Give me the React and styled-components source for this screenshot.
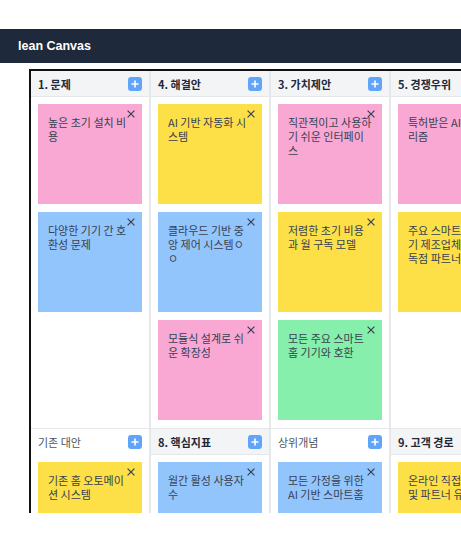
import React from "react";
import styled, { createGlobalStyle } from "styled-components";

const GlobalStyle = createGlobalStyle`
  html, body {
    margin: 0;
    padding: 0;
    background: #ffffff;
    overflow: hidden;
  }
  body {
    font-family: "Noto Sans CJK KR", "Noto Sans", sans-serif;
  }
`;

const cardColors = {
  pink: "#f9a8d4",
  yellow: "#fde047",
  blue: "#93c5fd",
  green: "#86efac",
};

// Styled components
const Page = styled.div`
  padding-top: 29px;
`;

const NavBar = styled.header`
  height: 34px;
  background: #1e293b;
  display: flex;
  align-items: center;
  padding-left: 18px;
`;

const Brand = styled.h1`
  margin: 0;
  color: #ffffff;
  font-family: "Liberation Sans", Arial, sans-serif;
  font-size: 12.5px;
  font-weight: 700;
`;

const CanvasViewport = styled.div`
  margin: 6px 0 0 29px;
  height: 444px;
  overflow: hidden;
`;

const Board = styled.div`
  display: grid;
  grid-template-columns: repeat(5, 120px);
  width: max-content;
  border: 2px solid #111111;
  background: #ffffff;
`;

const Section = styled.section`
  display: flex;
  flex-direction: column;
  border-right: 2px solid #e5e7eb;
  border-bottom: 1px solid #e5e7eb;
`;

const SectionHeader = styled.div`
  height: 25px;
  display: flex;
  align-items: center;
  justify-content: space-between;
  padding: 0 7px;
  background: ${(p) => (p.$sub ? "#ffffff" : "#f3f4f6")};
  border-bottom: 1px solid ${(p) => (p.$sub ? "#ffffff" : "#e5e7eb")};
`;

const SectionTitle = styled.span`
  font-size: 11px;
  font-weight: ${(p) => (p.$sub ? 400 : 700)};
  color: ${(p) => (p.$sub ? "#4b5563" : "#1f2937")};
`;

const AddButton = styled.button`
  width: 14px;
  height: 14px;
  padding: 0;
  border: none;
  border-radius: 3px;
  background: #60a5fa;
  display: flex;
  align-items: center;
  justify-content: center;
`;

const CardList = styled.div`
  flex: 1;
  display: flex;
  flex-direction: column;
  gap: 8px;
  padding: 7px 7px 8px;
`;

const Card = styled.div`
  position: relative;
  height: 100px;
  box-sizing: border-box;
  padding: 11px 10px 10px;
  background: ${(p) => cardColors[p.$color]};
  color: #374151;
  font-size: 11px;
  line-height: 14px;
`;

const CloseButton = styled.button`
  position: absolute;
  top: 6px;
  right: 7px;
  width: 8px;
  height: 8px;
  padding: 0;
  border: none;
  background: transparent;
  display: flex;
`;

const PlusIcon = () => (
  <svg width="8" height="8" viewBox="0 0 8 8">
    <path d="M4 0.5V7.5M0.5 4H7.5" stroke="#ffffff" strokeWidth="1.6" />
  </svg>
);

const CloseIcon = () => (
  <svg width="8" height="8" viewBox="0 0 8 8">
    <path d="M0.6 0.6L7.4 7.4M7.4 0.6L0.6 7.4" stroke="#374151" strokeWidth="1.2" />
  </svg>
);

const sections = [
  {
    title: "1. 문제",
    cards: [
      { text: "높은 초기 설치 비용", color: "pink" },
      { text: "다양한 기기 간 호환성 문제", color: "blue" },
    ],
  },
  {
    title: "4. 해결안",
    cards: [
      { text: "AI 기반 자동화 시스템", color: "yellow" },
      { text: "클라우드 기반 중앙 제어 시스템ㅇㅇ", color: "blue" },
      { text: "모듈식 설계로 쉬운 확장성", color: "pink" },
    ],
  },
  {
    title: "3. 가치제안",
    cards: [
      { text: "직관적이고 사용하기 쉬운 인터페이스", color: "pink" },
      { text: "저렴한 초기 비용과 월 구독 모델", color: "yellow" },
      { text: "모든 주요 스마트홈 기기와 호환", color: "green" },
    ],
  },
  {
    title: "5. 경쟁우위",
    cards: [
      { text: "특허받은 AI 알고리즘", color: "pink" },
      { text: "주요 스마트홈 기기 제조업체와의 독점 파트너십", color: "yellow" },
    ],
  },
  {
    title: "2. 고객군",
    cards: [{ text: "기술에 관심 있는 30-40대 가구", color: "green" }],
  },
  {
    title: "기존 대안",
    sub: true,
    cards: [{ text: "기존 홈 오토메이션 시스템", color: "yellow" }],
  },
  {
    title: "8. 핵심지표",
    cards: [{ text: "월간 활성 사용자 수", color: "blue" }],
  },
  {
    title: "상위개념",
    sub: true,
    cards: [{ text: "모든 가정을 위한 AI 기반 스마트홈", color: "blue" }],
  },
  {
    title: "9. 고객 경로",
    cards: [{ text: "온라인 직접 판매 및 파트너 유통", color: "yellow" }],
  },
  {
    title: "얼리어답터",
    sub: true,
    cards: [{ text: "스마트 기기 얼리어답터", color: "pink" }],
  },
];

const App = () => {
  return (
    <Page>
      <GlobalStyle />
      <NavBar>
        <Brand>lean Canvas</Brand>
      </NavBar>
      <CanvasViewport>
        <Board>
          {sections.map((section) => (
            <Section key={section.title}>
              <SectionHeader $sub={section.sub}>
                <SectionTitle $sub={section.sub}>{section.title}</SectionTitle>
                <AddButton title="추가">
                  <PlusIcon />
                </AddButton>
              </SectionHeader>
              <CardList>
                {section.cards.map((card, i) => (
                  <Card key={i} $color={card.color}>
                    {card.text}
                    <CloseButton title="삭제">
                      <CloseIcon />
                    </CloseButton>
                  </Card>
                ))}
              </CardList>
            </Section>
          ))}
        </Board>
      </CanvasViewport>
    </Page>
  );
};

export default App;
